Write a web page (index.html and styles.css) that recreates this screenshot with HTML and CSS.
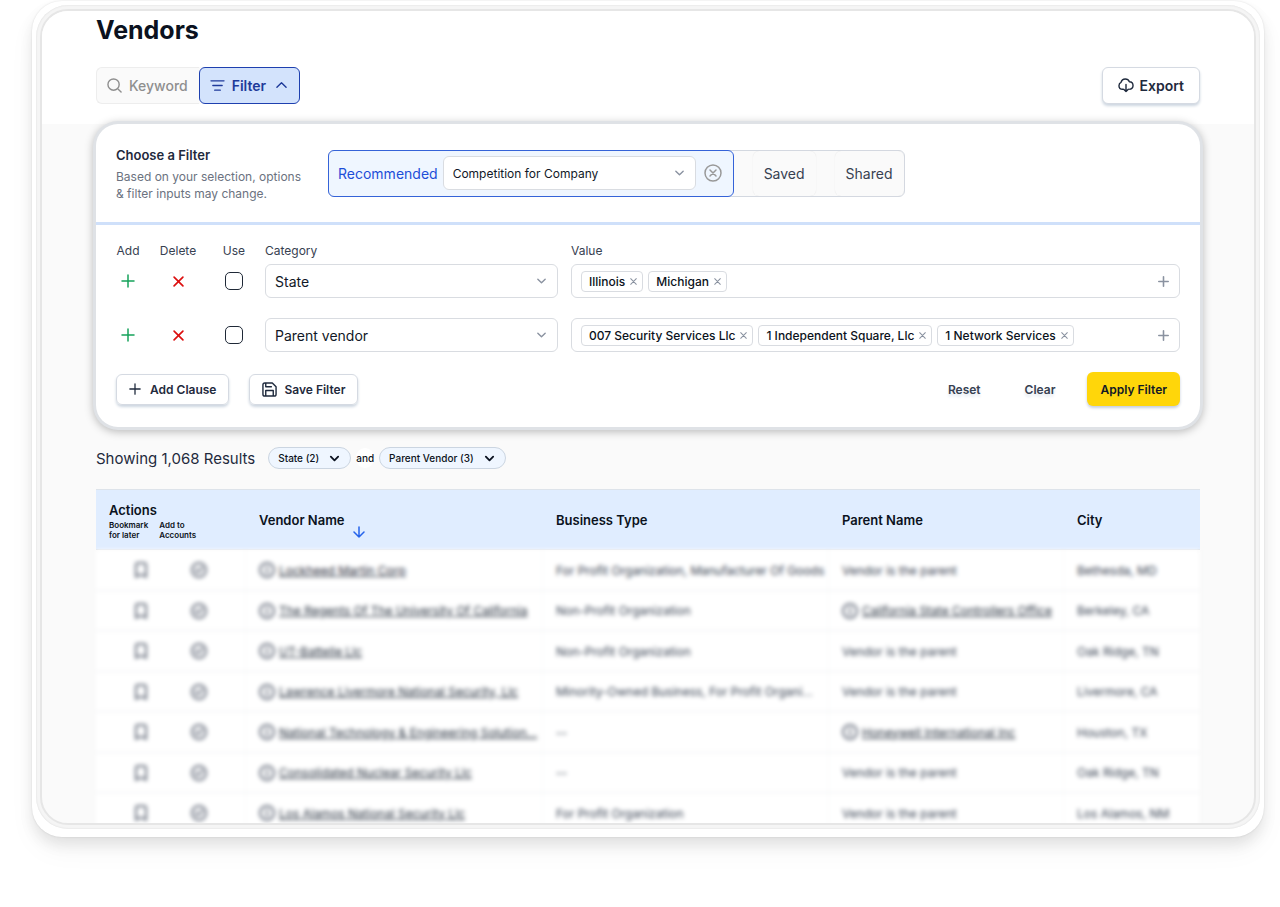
FILE: index.html
```html
<!DOCTYPE html>
<html lang="en">
<head>
  <meta charset="UTF-8">
  <meta name="viewport" content="width=device-width, initial-scale=1.0">
  <title>Vendors</title>
  <link rel="stylesheet" href="styles.css">
</head>
<body>
  <!-- shared icons -->
  <svg class="sprite" aria-hidden="true">
    <symbol id="chevron" viewBox="0 0 12 12"><path d="M2 4l4 4 4-4"/></symbol>
    <symbol id="plus" viewBox="0 0 14 14"><path d="M7 1v12M1 7h12"/></symbol>
    <symbol id="cross" viewBox="0 0 10 10"><path d="M1 1l8 8M9 1L1 9"/></symbol>
    <symbol id="info" viewBox="0 0 16 16"><circle cx="8" cy="8" r="7"/><path d="M8 7v4M8 5v0"/></symbol>
    <symbol id="bookmark" viewBox="0 0 16 16"><path d="M3 15V3q0-2 2-2h6q2 0 2 2v12l-3-2H6z"/></symbol>
    <symbol id="check" viewBox="0 0 16 16"><circle cx="8" cy="8" r="7"/><path d="M5 8l2 2 4-4"/></symbol>
  </svg>

  <div class="frame">
    <div class="bezel">
      <main class="screen">
        <header class="page-header">
          <h1>Vendors</h1>
          <div class="toolbar">
            <div class="search-toggle">
              <button class="keyword-btn">
                <svg width="15" height="15" viewBox="0 0 16 16"><circle cx="7" cy="7" r="6"/><path d="M12 12l3 3"/></svg>
                Keyword
              </button>
              <button class="filter-btn" aria-expanded="true">
                <svg width="15" height="13" viewBox="0 0 16 14"><path d="M1 2h14M3 7h10M5 12h6"/></svg>
                Filter
                <svg class="caret" width="11" height="11" viewBox="0 0 12 12"><path d="M1 8l5-5 5 5"/></svg>
              </button>
            </div>
            <button class="export-btn">
              <svg width="16" height="15" viewBox="0 0 17 16"><path d="M5 12C2.500 12 1 10.300 1 8.200 1 6.500 1.900 5.200 3.200 4.700 3.700 2.600 5.400 1 7.700 1c2 0 3.700 1.200 4.400 3C14.300 4.100 16 5.800 16 8.100c0 2.100-1.400 3.700-3.500 3.900M8.500 7v7.500M6 12l2.500 2.500L11 12"/></svg>
              Export
            </button>
          </div>
        </header>

        <div class="content">
          <section class="filter-panel">
            <div class="choose">
              <div class="choose-text">
                <h2>Choose a Filter</h2>
                <p>Based on your selection, options &amp; filter inputs may change.</p>
              </div>
              <div class="tabs">
                <div class="tab-active">
                  <label for="recommended">Recommended</label>
                  <div class="select-wrap">
                    <select id="recommended"><option>Competition for Company</option></select>
                    <svg><use href="#chevron"/></svg>
                  </div>
                  <button class="clear-tab" aria-label="Clear recommended filter">
                    <svg width="20" height="20" viewBox="0 0 20 20"><circle cx="10" cy="10" r="8"/><path d="M7 7l6 6M13 7l-6 6"/></svg>
                  </button>
                </div>
                <button class="tab">Saved</button>
                <button class="tab">Shared</button>
              </div>
            </div>

            <div class="clauses">
              <div class="clause labels">
                <span>Add</span>
                <span>Delete</span>
                <label for="use1">Use</label>
                <label for="category1">Category</label>
                <span>Value</span>
              </div>

              <div class="clause">
                <button class="icon-btn add" aria-label="Add clause"><svg><use href="#plus"/></svg></button>
                <button class="icon-btn delete" aria-label="Delete clause"><svg><use href="#cross"/></svg></button>
                <input type="checkbox" id="use1">
                <div class="select-wrap">
                  <select id="category1"><option>State</option></select>
                  <svg><use href="#chevron"/></svg>
                </div>
                <div class="values">
                  <span class="chip">Illinois <button aria-label="Remove Illinois"><svg><use href="#cross"/></svg></button></span>
                  <span class="chip">Michigan <button aria-label="Remove Michigan"><svg><use href="#cross"/></svg></button></span>
                  <button class="add-value" aria-label="Add value"><svg><use href="#plus"/></svg></button>
                </div>
              </div>

              <div class="clause">
                <button class="icon-btn add" aria-label="Add clause"><svg><use href="#plus"/></svg></button>
                <button class="icon-btn delete" aria-label="Delete clause"><svg><use href="#cross"/></svg></button>
                <input type="checkbox" id="use2" aria-label="Use">
                <div class="select-wrap">
                  <select id="category2" aria-label="Category"><option>Parent vendor</option></select>
                  <svg><use href="#chevron"/></svg>
                </div>
                <div class="values">
                  <span class="chip">007 Security Services Llc <button aria-label="Remove 007 Security Services Llc"><svg><use href="#cross"/></svg></button></span>
                  <span class="chip">1 Independent Square, Llc <button aria-label="Remove 1 Independent Square, Llc"><svg><use href="#cross"/></svg></button></span>
                  <span class="chip">1 Network Services <button aria-label="Remove 1 Network Services"><svg><use href="#cross"/></svg></button></span>
                  <button class="add-value" aria-label="Add value"><svg><use href="#plus"/></svg></button>
                </div>
              </div>

              <div class="panel-actions">
                <button class="outline-btn"><svg width="12" height="12"><use href="#plus"/></svg> Add Clause</button>
                <button class="outline-btn save-btn">
                  <svg width="15" height="15" viewBox="0 0 16 16"><path d="M3 1h8l4 4v8q0 2-2 2H3q-2 0-2-2V3q0-2 2-2zM4 15V9h8v6M4 1v4h6"/></svg>
                  Save Filter
                </button>
                <div class="right-actions">
                  <button class="text-btn">Reset</button>
                  <button class="text-btn">Clear</button>
                  <button class="apply-btn">Apply Filter</button>
                </div>
              </div>
            </div>
          </section>

          <div class="results">
            <span class="results-count">Showing 1,068 Results</span>
            <button class="pill">State (2) <svg><use href="#chevron"/></svg></button>
            <span class="and">and</span>
            <button class="pill">Parent Vendor (3) <svg><use href="#chevron"/></svg></button>
          </div>

          <table class="vendors">
            <colgroup>
              <col class="col-actions">
              <col class="col-name">
              <col class="col-type">
              <col class="col-parent">
              <col>
            </colgroup>
            <thead>
              <tr>
                <th>
                  <div class="actions-head">Actions</div>
                  <div class="sub-heads"><span>Bookmark<br>for later</span><span>Add to<br>Accounts</span></div>
                </th>
                <th>
                  <div class="sorted">Vendor Name
                    <svg width="12" height="12" viewBox="0 0 12 12"><path d="M6 1v10M1 6l5 5 5-5"/></svg>
                  </div>
                </th>
                <th>Business Type</th>
                <th>Parent Name</th>
                <th>City</th>
              </tr>
            </thead>
            <tbody>
              <tr>
                <td><div class="row-icons"><svg><use href="#bookmark"/></svg><svg><use href="#check"/></svg></div></td>
                <td><div class="entity"><svg><use href="#info"/></svg><a href="#">Lockheed Martin Corp</a></div></td>
                <td>For Profit Organization, Manufacturer Of Goods</td>
                <td>Vendor is the parent</td>
                <td>Bethesda, MD</td>
              </tr>
              <tr>
                <td><div class="row-icons"><svg><use href="#bookmark"/></svg><svg><use href="#check"/></svg></div></td>
                <td><div class="entity"><svg><use href="#info"/></svg><a href="#">The Regents Of The University Of California</a></div></td>
                <td>Non-Profit Organization</td>
                <td><div class="entity"><svg><use href="#info"/></svg><a href="#">California State Controllers Office</a></div></td>
                <td>Berkeley, CA</td>
              </tr>
              <tr>
                <td><div class="row-icons"><svg><use href="#bookmark"/></svg><svg><use href="#check"/></svg></div></td>
                <td><div class="entity"><svg><use href="#info"/></svg><a href="#">UT-Battelle Llc</a></div></td>
                <td>Non-Profit Organization</td>
                <td>Vendor is the parent</td>
                <td>Oak Ridge, TN</td>
              </tr>
              <tr>
                <td><div class="row-icons"><svg><use href="#bookmark"/></svg><svg><use href="#check"/></svg></div></td>
                <td><div class="entity"><svg><use href="#info"/></svg><a href="#">Lawrence Livermore National Security, Llc</a></div></td>
                <td>Minority-Owned Business, For Profit Organi...</td>
                <td>Vendor is the parent</td>
                <td>Livermore, CA</td>
              </tr>
              <tr>
                <td><div class="row-icons"><svg><use href="#bookmark"/></svg><svg><use href="#check"/></svg></div></td>
                <td><div class="entity"><svg><use href="#info"/></svg><a href="#">National Technology &amp; Engineering Solution...</a></div></td>
                <td>--</td>
                <td><div class="entity"><svg><use href="#info"/></svg><a href="#">Honeywell International Inc</a></div></td>
                <td>Houston, TX</td>
              </tr>
              <tr>
                <td><div class="row-icons"><svg><use href="#bookmark"/></svg><svg><use href="#check"/></svg></div></td>
                <td><div class="entity"><svg><use href="#info"/></svg><a href="#">Consolidated Nuclear Security Llc</a></div></td>
                <td>--</td>
                <td>Vendor is the parent</td>
                <td>Oak Ridge, TN</td>
              </tr>
              <tr>
                <td><div class="row-icons"><svg><use href="#bookmark"/></svg><svg><use href="#check"/></svg></div></td>
                <td><div class="entity"><svg><use href="#info"/></svg><a href="#">Los Alamos National Security Llc</a></div></td>
                <td>For Profit Organization</td>
                <td>Vendor is the parent</td>
                <td>Los Alamos, NM</td>
              </tr>
            </tbody>
          </table>
        </div>
      </main>
    </div>
  </div>
</body>
</html>
```
FILE: styles.css
```css
* { box-sizing: border-box; }
body {
  margin: 0;
  background: #fff;
  color: #0b1220;
  font-family: Inter, "Liberation Sans", sans-serif;
  font-size: 14px;
  overflow: hidden;
}
h1, h2, p { margin: 0; }
button, select {
  font: inherit;
  color: inherit;
  cursor: pointer;
}
button {
  display: flex;
  align-items: center;
  justify-content: center;
  padding: 0;
  border: none;
  background: none;
  white-space: nowrap;
}
svg {
  flex: none;
  fill: none;
  stroke: currentColor;
  stroke-width: 1.5;
  stroke-linecap: round;
  stroke-linejoin: round;
}
.sprite {
  position: absolute;
  width: 0;
  height: 0;
}

/* device frame */
.frame {
  height: calc(100vh - 71px);
  margin: 1px 16px 70px 32px;
  padding: 4px 4px 8px;
  border-radius: 30px;
  background: #fff;
  box-shadow: 0 0 2px rgba(0,0,0,0.12), 0 8px 14px rgba(0,0,0,0.09), 0 14px 28px rgba(0,0,0,0.04);
}
.bezel {
  height: 100%;
  padding: 4px;
  border-radius: 32px;
  background: #f5f5f5;
  box-shadow: inset 0 0 2px rgba(0,0,0,0.12);
}
.screen {
  height: 100%;
  border: 2px solid #e6e6e6;
  border-radius: 28px;
  background: #fafafa;
  overflow: hidden;
}
.page-header {
  padding: 1px 54px 20px;
  background: #fff;
}
h1 {
  margin-bottom: 19px;
  font-size: 25px;
  line-height: 36px;
  font-weight: 700;
}
.toolbar {
  display: flex;
  justify-content: space-between;
}
.search-toggle {
  display: flex;
  border-radius: 6px;
  background: #fafafa;
}
.keyword-btn, .filter-btn, .export-btn {
  height: 37px;
  gap: 7px;
  border-radius: 6px;
  font-weight: 500;
}
.keyword-btn {
  padding: 0 11px 0 10px;
  border: 1px solid #ededed;
  border-right: none;
  border-radius: 6px 0 0 6px;
  color: #8f8f8f;
}
.filter-btn {
  padding: 0 12px 0 10px;
  border: 1px solid #1e40af;
  background: #d3e3fc;
  color: #1e3a9a;
  font-weight: 600;
}
.filter-btn .caret { margin-left: 3px; }
.export-btn {
  gap: 6px;
  padding: 0 15px;
  border: 1px solid #d5dae2;
  background: #fff;
  color: #1f2a3d;
  font-weight: 600;
  box-shadow: 0 2px 3px #cdd6e0;
}

/* filter panel */
.content { padding: 0 54px; }
.filter-panel {
  border-radius: 22px;
  background: #fff;
  box-shadow: 0 0 0 3px #dfe2e6, 0 2px 8px 3px rgba(0,0,0,0.25);
}
.choose {
  display: flex;
  align-items: center;
  height: 101px;
  padding: 0 20px;
  border-bottom: 3px solid #cfe0fa;
}
.choose-text { width: 212px; }
.choose-text h2 {
  margin-bottom: 3px;
  color: #1f2a3d;
  font-size: 13px;
  line-height: 20px;
  font-weight: 600;
}
.choose-text p {
  padding-right: 20px;
  color: #6b7280;
  font-size: 12px;
  line-height: 17px;
}
.tabs {
  display: flex;
  gap: 19px;
  height: 47px;
  border: 1px solid #d3d8e0;
  border-radius: 6px;
  background: #fafafa;
}
.tab-active {
  display: flex;
  align-items: center;
  gap: 5px;
  margin: -1px 0 -1px -1px;
  padding: 0 8px 0 9px;
  border: 1px solid #3563d8;
  border-radius: 6px;
  background: #eff6ff;
  color: #1d4ed8;
}
.tab-active .select-wrap { width: 253px; }
.clear-tab {
  width: 24px;
  color: #999;
}
.tab {
  padding: 0 11px;
  border-radius: 6px;
  color: #374151;
  box-shadow: 0 0 1px #ddd;
}
.select-wrap { position: relative; }
.select-wrap select {
  width: 100%;
  height: 34px;
  padding: 0 30px 0 9px;
  border: 1px solid #d9dce1;
  border-radius: 6px;
  background: #fff;
  color: #111827;
  appearance: none;
}
.tab-active select { font-size: 12px; }
.select-wrap svg {
  position: absolute;
  top: 11px;
  right: 11px;
  width: 11px;
  height: 12px;
  color: #8a92a0;
  pointer-events: none;
}
.clauses { padding: 18px 20px 21px; }
.clause {
  display: grid;
  grid-template-columns: 24px 50px 36px 293px 1fr;
  align-items: center;
  justify-items: center;
  column-gap: 13px;
  margin-bottom: 20px;
}
.clause > :nth-child(n + 4) { justify-self: stretch; }
.labels {
  margin-bottom: 5px;
  color: #374151;
  font-size: 12px;
  line-height: 16px;
}
.icon-btn svg {
  width: 14px;
  height: 14px;
}
.add { color: #16a35b; }
.delete { color: #dc0f0f; }
.delete svg {
  width: 11px;
  height: 11px;
}
input[type="checkbox"] {
  width: 18px;
  height: 18px;
  margin: 0;
  border: 1px solid #1f2937;
  border-radius: 5px;
  background: #fff;
  appearance: none;
}
.values {
  display: flex;
  align-items: center;
  gap: 5px;
  height: 34px;
  padding: 0 10px 0 9px;
  border: 1px solid #d9dce1;
  border-radius: 6px;
}
.chip {
  display: flex;
  align-items: center;
  gap: 5px;
  height: 21px;
  padding: 0 5px 0 7px;
  border: 1px solid #d9dce1;
  border-radius: 4px;
  font-size: 12px;
  font-weight: 500;
  white-space: nowrap;
}
.chip svg {
  width: 7px;
  height: 7px;
  color: #8a92a0;
}
.add-value {
  margin-left: auto;
  color: #8a92a0;
}
.add-value svg {
  width: 11px;
  height: 11px;
  stroke-width: 2;
}
.panel-actions {
  display: flex;
  align-items: center;
  gap: 20px;
  height: 34px;
  font-size: 12px;
  font-weight: 600;
}
.outline-btn {
  gap: 9px;
  height: 31px;
  padding: 0 12px;
  border: 1px solid #d5dae2;
  border-radius: 6px;
  color: #1f2a3d;
  box-shadow: 0 2px 3px #cdd6e0;
}
.save-btn { gap: 7px; }
.right-actions {
  display: flex;
  align-items: center;
  gap: 32px;
  margin-left: auto;
}
.text-btn {
  color: #374151;
  text-shadow: 0 3px 3px #dfe6ee;
}
.text-btn + .text-btn { margin-left: 12px; }
.apply-btn {
  height: 34px;
  padding: 0 13px;
  border-radius: 6px;
  background: #ffd60a;
  color: #111827;
  box-shadow: 0 2px 3px #c5cede;
}

/* results */
.results {
  display: flex;
  align-items: center;
  gap: 5px;
  height: 22px;
  margin: 20px 0;
  font-size: 11px;
  font-weight: 500;
}
.results-count {
  margin-right: 8px;
  color: #1f2a3d;
  font-size: 15px;
  font-weight: 400;
}
.pill {
  gap: 10px;
  height: 22px;
  padding: 0 10px 0 9px;
  border: 1px solid #cbd5e1;
  border-radius: 11px;
  background: #eff6ff;
  font-size: 10px;
}
.pill svg {
  width: 11px;
  height: 11px;
  stroke-width: 2;
}
.and {
  padding: 4px 0;
  border-radius: 11px;
  background: #fff;
  font-size: 10px;
}
.vendors {
  width: 100%;
  border-collapse: separate;
  border-spacing: 0;
  table-layout: fixed;
}
.col-actions { width: 150px; }
.col-name { width: 297px; }
.col-type { width: 286px; }
.col-parent { width: 235px; }
.vendors th {
  height: 61px;
  padding: 0 13px;
  border-top: 1px solid #dde3ea;
  border-bottom: 1px solid #dde3ea;
  background: #e0edff;
  font-size: 13px;
  font-weight: 600;
  line-height: 16px;
  text-align: left;
}
.actions-head { padding-top: 2px; }
.sub-heads {
  display: flex;
  gap: 11px;
  margin-top: 2px;
  font-size: 8px;
  line-height: 10px;
}
.sorted {
  display: flex;
  gap: 8px;
}
.sorted svg {
  align-self: flex-end;
  margin-bottom: -10px;
  color: #2563eb;
}
.vendors tbody { filter: blur(2px); }
.vendors td {
  height: 41px;
  padding: 0 0 0 13px;
  border-bottom: 1px solid #eceef1;
  border-right: 1px solid #f8f9fa;
  background: #fff;
  color: #374151;
  font-size: 12px;
  white-space: nowrap;
}
.vendors tr:nth-child(even) td { height: 40px; }
.row-icons {
  display: flex;
  justify-content: space-between;
  padding: 0 38px 0 24px;
}
.vendors td svg {
  width: 16px;
  height: 16px;
  stroke-width: 2;
  color: #6b7280;
}
.entity {
  display: flex;
  align-items: center;
  gap: 4px;
}
.entity a {
  color: #1f2937;
}
```
